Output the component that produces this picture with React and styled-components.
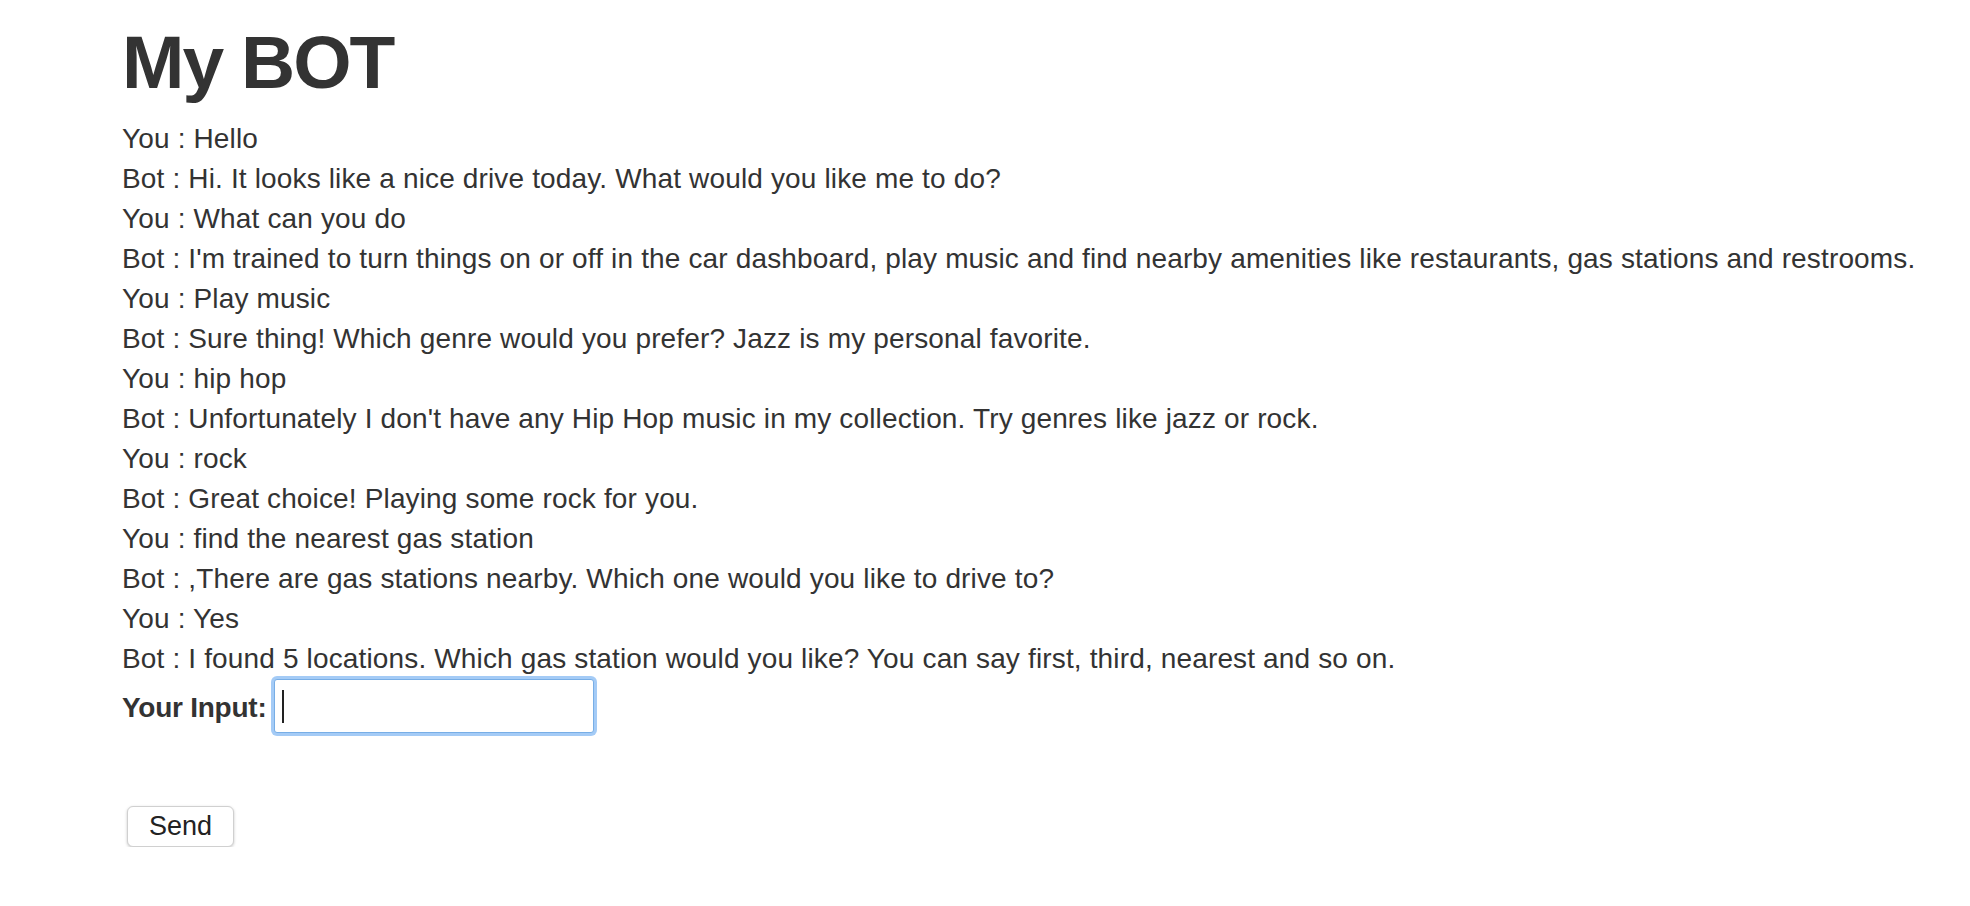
import React from 'react';
import styled, { createGlobalStyle } from 'styled-components';

const messages = [
  { who: 'You', text: 'Hello' },
  { who: 'Bot', text: 'Hi. It looks like a nice drive today. What would you like me to do?' },
  { who: 'You', text: 'What can you do' },
  { who: 'Bot', text: "I'm trained to turn things on or off in the car dashboard, play music and find nearby amenities like restaurants, gas stations and restrooms." },
  { who: 'You', text: 'Play music' },
  { who: 'Bot', text: 'Sure thing! Which genre would you prefer? Jazz is my personal favorite.' },
  { who: 'You', text: 'hip hop' },
  { who: 'Bot', text: "Unfortunately I don't have any Hip Hop music in my collection. Try genres like jazz or rock." },
  { who: 'You', text: 'rock' },
  { who: 'Bot', text: 'Great choice! Playing some rock for you.' },
  { who: 'You', text: 'find the nearest gas station' },
  { who: 'Bot', text: ',There are gas stations nearby. Which one would you like to drive to?' },
  { who: 'You', text: 'Yes' },
  { who: 'Bot', text: 'I found 5 locations. Which gas station would you like? You can say first, third, nearest and so on.' },
];

const GlobalStyle = createGlobalStyle`
  body {
    margin: 0;
    background: #fff;
    color: #333;
    font-family: "Liberation Sans", Helvetica, Arial, sans-serif;
  }
`;

const Page = styled.div`
  padding: 0 0 0 122px;
`;

const Title = styled.h1`
  margin: 0 0 19px;
  padding-top: 24px;
  font-size: 75px;
  line-height: 76px;
  font-weight: bold;
  letter-spacing: -2px;
  color: #333;
`;

const Chat = styled.div`
  display: flex;
  flex-direction: column;
`;

const Line = styled.div`
  font-size: 28px;
  line-height: 40px;
  letter-spacing: 0.15px;
  white-space: nowrap;
`;

const InputRow = styled.form`
  display: flex;
  align-items: center;
  gap: 8px;
`;

const Label = styled.label`
  font-size: 28px;
  line-height: 40px;
  font-weight: bold;
  letter-spacing: -0.25px;
  margin-top: 4px;
`;

const Field = styled.div`
  position: relative;
`;

const TextInput = styled.input`
  box-sizing: border-box;
  width: 320px;
  height: 54px;
  padding: 0 8px;
  font-family: inherit;
  font-size: 28px;
  color: #333;
  border: 1px solid #78aee6;
  border-radius: 3px;
  box-shadow: 0 0 0 3px rgba(134, 186, 243, 0.75);
  outline: none;
  caret-color: transparent;
`;

const Caret = styled.span`
  position: absolute;
  left: 8px;
  top: 11px;
  width: 2px;
  height: 33px;
  background: #222;
`;

const SendButton = styled.button`
  box-sizing: border-box;
  margin: 73px 0 0 5px;
  width: 107px;
  height: 41px;
  padding: 0;
  font-family: inherit;
  font-size: 27px;
  color: #222;
  background: #fff;
  border: 1px solid #d0d0d0;
  border-radius: 6px;
  box-shadow: 0 1px 3px rgba(0, 0, 0, 0.22);
`;

export default function App() {
  return (
    <>
      <GlobalStyle />
      <Page>
        <Title>My BOT</Title>
        <Chat>
          {messages.map((m, i) => (
            <Line key={i}>{m.who} : {m.text}</Line>
          ))}
        </Chat>
        <InputRow onSubmit={e => e.preventDefault()}>
          <Label htmlFor="msg">Your Input:</Label>
          <Field>
            <TextInput id="msg" type="text" />
            <Caret />
          </Field>
        </InputRow>
        <SendButton type="button">Send</SendButton>
      </Page>
    </>
  );
}
